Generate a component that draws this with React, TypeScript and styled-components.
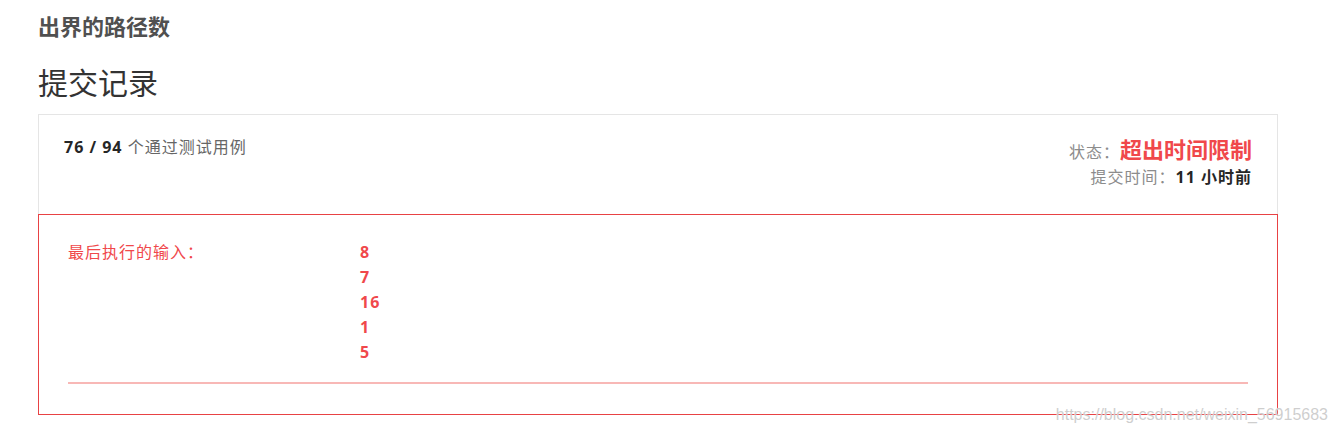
import React from 'react';
import styled, { createGlobalStyle } from 'styled-components';

const GlobalStyle = createGlobalStyle`
    body {
        margin: 0;
        background: #ffffff;
        font-family: 'Open Sans', 'Noto Sans CJK SC', sans-serif;
        color: #333333;
    }
`;

const Page = styled.div`
    position: relative;
    width: 1337px;
    height: 433px;
    padding: 0 0 0 38px;
    box-sizing: border-box;
    overflow: hidden;
`;

const ProblemTitle = styled.h3`
    margin: 14px 0 0;
    font-size: 22px;
    line-height: 24px;
    font-weight: 700;
    color: #505050;
`;

const SectionTitle = styled.h2`
    margin: 28px 0 0;
    font-size: 30px;
    line-height: 33px;
    font-weight: 400;
    color: #333333;
`;

const Card = styled.div`
    margin-top: 15px;
    width: 1240px;
    letter-spacing: 1px;
`;

const CardHead = styled.div`
    display: flex;
    justify-content: space-between;
    align-items: flex-start;
    height: 100px;
    box-sizing: border-box;
    padding: 21px 25px 0 25px;
    border: 1px solid #e5e5e5;
    border-bottom: none;
`;

const Passed = styled.div`
    font-size: 16px;
    line-height: 22px;
    color: #666666;
`;

const Strong = styled.b<{ $red?: boolean; $size?: number }>`
    font-weight: 700;
    color: ${(p) => (p.$red ? '#f0484b' : '#262626')};
    font-size: ${(p) => (p.$size ? `${p.$size}px` : 'inherit')};
    letter-spacing: ${(p) => (p.$red ? '0' : 'inherit')};
`;

const StatusBlock = styled.div`
    display: flex;
    flex-direction: column;
    align-items: flex-end;
`;

const StatusLine = styled.div<{ $height: number }>`
    font-size: 16px;
    line-height: ${(p) => p.$height}px;
    color: #8c8c8c;
`;

const ErrorBox = styled.div`
    border: 1px solid #e84244;
    padding: 25px 29px 30px;
`;

const InputRow = styled.div`
    display: grid;
    grid-template-columns: 292px 1fr;
    font-size: 16px;
    line-height: 25px;
    color: #f0484b;
`;

const InputLabel = styled.div`
    font-weight: 400;
`;

const InputValues = styled.div`
    display: flex;
    flex-direction: column;
    font-weight: 700;
`;

const Divider = styled.hr`
    margin: 17px 0 0;
    border: none;
    border-top: 2px solid #f8b8b6;
    height: 0;
`;

const Watermark = styled.div`
    position: absolute;
    right: 9px;
    bottom: 9px;
    font-family: 'Liberation Sans', Arial, sans-serif;
    font-size: 16px;
    color: rgba(190, 190, 190, 0.75);
    text-shadow: 0 0 1px #ffffff;
    pointer-events: none;
`;

const lastInput = ['8', '7', '16', '1', '5'];

export default function App() {
    return (
        <Page>
            <GlobalStyle />
            <ProblemTitle>出界的路径数</ProblemTitle>
            <SectionTitle>提交记录</SectionTitle>
            <Card>
                <CardHead>
                    <Passed>
                        <Strong>76 / 94</Strong> 个通过测试用例
                    </Passed>
                    <StatusBlock>
                        <StatusLine $height={26}>
                            状态：<Strong $red $size={22}>超出时间限制</Strong>
                        </StatusLine>
                        <StatusLine $height={24}>
                            提交时间：<Strong>11 小时前</Strong>
                        </StatusLine>
                    </StatusBlock>
                </CardHead>
                <ErrorBox>
                    <InputRow>
                        <InputLabel>最后执行的输入：</InputLabel>
                        <InputValues>
                            {lastInput.map((v, i) => (
                                <span key={i}>{v}</span>
                            ))}
                        </InputValues>
                    </InputRow>
                    <Divider />
                </ErrorBox>
            </Card>
            <Watermark>https://blog.csdn.net/weixin_56915683</Watermark>
        </Page>
    );
}
